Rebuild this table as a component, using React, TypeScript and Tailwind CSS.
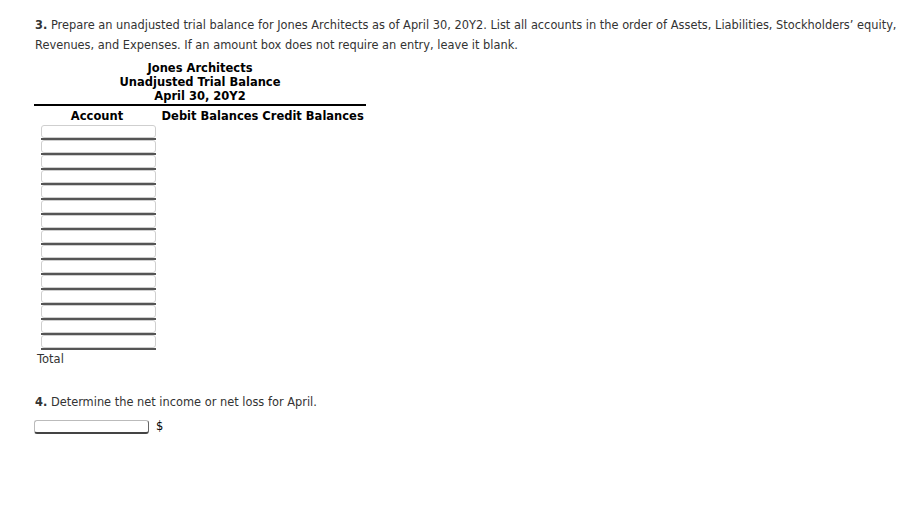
const rows = Array.from({ length: 15 }, (_, i) => i);

function AccountBox() {
  return (
    <div className="ml-[7px] w-[115px]">
      <div className="h-[13px] rounded-[3px] border border-[#cfcfcf] bg-white" />
      <div className="h-[2px] bg-[#555]" />
    </div>
  );
}

export default function App() {
  return (
    <div className="min-h-[527px] w-[923px] bg-white pl-[35px] pt-[15px] font-['DejaVu_Sans',sans-serif] text-[#333]">
      <p className="text-[11.4px] leading-[20px]">
        <span className="font-bold">3.</span> Prepare an unadjusted trial balance for Jones
        Architects as of April 30, 20Y2. List all accounts in the order of Assets, Liabilities,
        Stockholders’ equity, Revenues, and Expenses. If an amount box does not require an entry,
        leave it blank.
      </p>

      <div className="-ml-px mt-[6px] w-[332px] text-[11.5px] text-black">
        <div className="border-b-2 border-black pb-[1px] text-center font-bold leading-[14px]">
          <div>Jones Architects</div>
          <div>Unadjusted Trial Balance</div>
          <div>April 30, 20Y2</div>
        </div>
        <div className="mt-[3px] flex font-bold leading-[14px]">
          <div className="w-[126px] text-center">Account</div>
          <div className="w-[100px] text-center">Debit Balances</div>
          <div className="flex-1 text-center">Credit Balances</div>
        </div>
        <div className="mt-[2px] flex flex-col">
          {rows.map((r) => (
            <AccountBox key={r} />
          ))}
        </div>
        <div className="mt-[2px] pl-[3px] leading-[14px] font-normal text-[#333]">Total</div>
      </div>

      <p className="mt-[26px] text-[11.4px] leading-[20px]">
        <span className="font-bold">4.</span> Determine the net income or net loss for April.
      </p>
      <div className="-ml-px mt-[6px] flex items-center gap-[7px] text-[11.5px]">
        <div className="h-[14px] w-[115px] rounded-[3px] border border-[#bbb] border-b-[#444] border-r-[#666] border-b-2 bg-white" />
        <span className="text-black">$</span>
      </div>
    </div>
  );
}
